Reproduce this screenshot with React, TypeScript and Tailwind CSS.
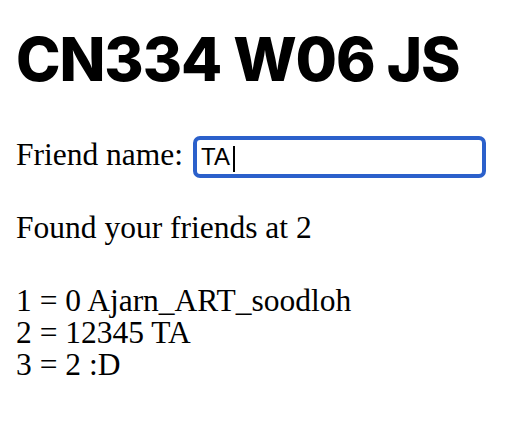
import { useState } from 'react';

const friends = ['0 Ajarn_ART_soodloh', '12345 TA', '2 :D'];

export default function App() {
  const [name, setName] = useState('TA');

  return (
    <div className="min-h-[436px] bg-white px-[16px] pt-[29px] text-black" style={{ fontFamily: '"Liberation Serif", "Times New Roman", serif' }}>
      {/* Title */}
      <h1 className="text-[60px] leading-[60px] font-extrabold tracking-[-1.1px]" style={{ fontFamily: 'Inter, sans-serif' }}>
        CN334 W06 JS
      </h1>

      {/* Search row */}
      <div className="mt-[47px] flex items-center text-[31.5px] leading-[34px]">
        <label htmlFor="friend" className="mb-[4px]">Friend name:</label>
        <div className="relative ml-[10px]">
          <input
            id="friend"
            value={name}
            onChange={(e) => setName(e.target.value)}
            className="h-[42px] w-[293px] rounded-[7px] border-[4px] border-[#2b60cb] pl-[4px] text-[24px] outline-none"
            style={{ fontFamily: '"Liberation Sans", Arial, sans-serif' }}
          />
          {/* caret */}
          <span className="pointer-events-none absolute left-[40px] top-[10px] h-[26px] w-[2px] bg-black" />
        </div>
      </div>

      <p className="mt-[33px] text-[31.5px] leading-[34px]">Found your friends at 2</p>

      <div className="mt-[40px] text-[31.5px] leading-[32px]">
        {friends.map((f, i) => (
          <div key={i}>
            {i + 1} = {f}
          </div>
        ))}
      </div>
    </div>
  );
}
